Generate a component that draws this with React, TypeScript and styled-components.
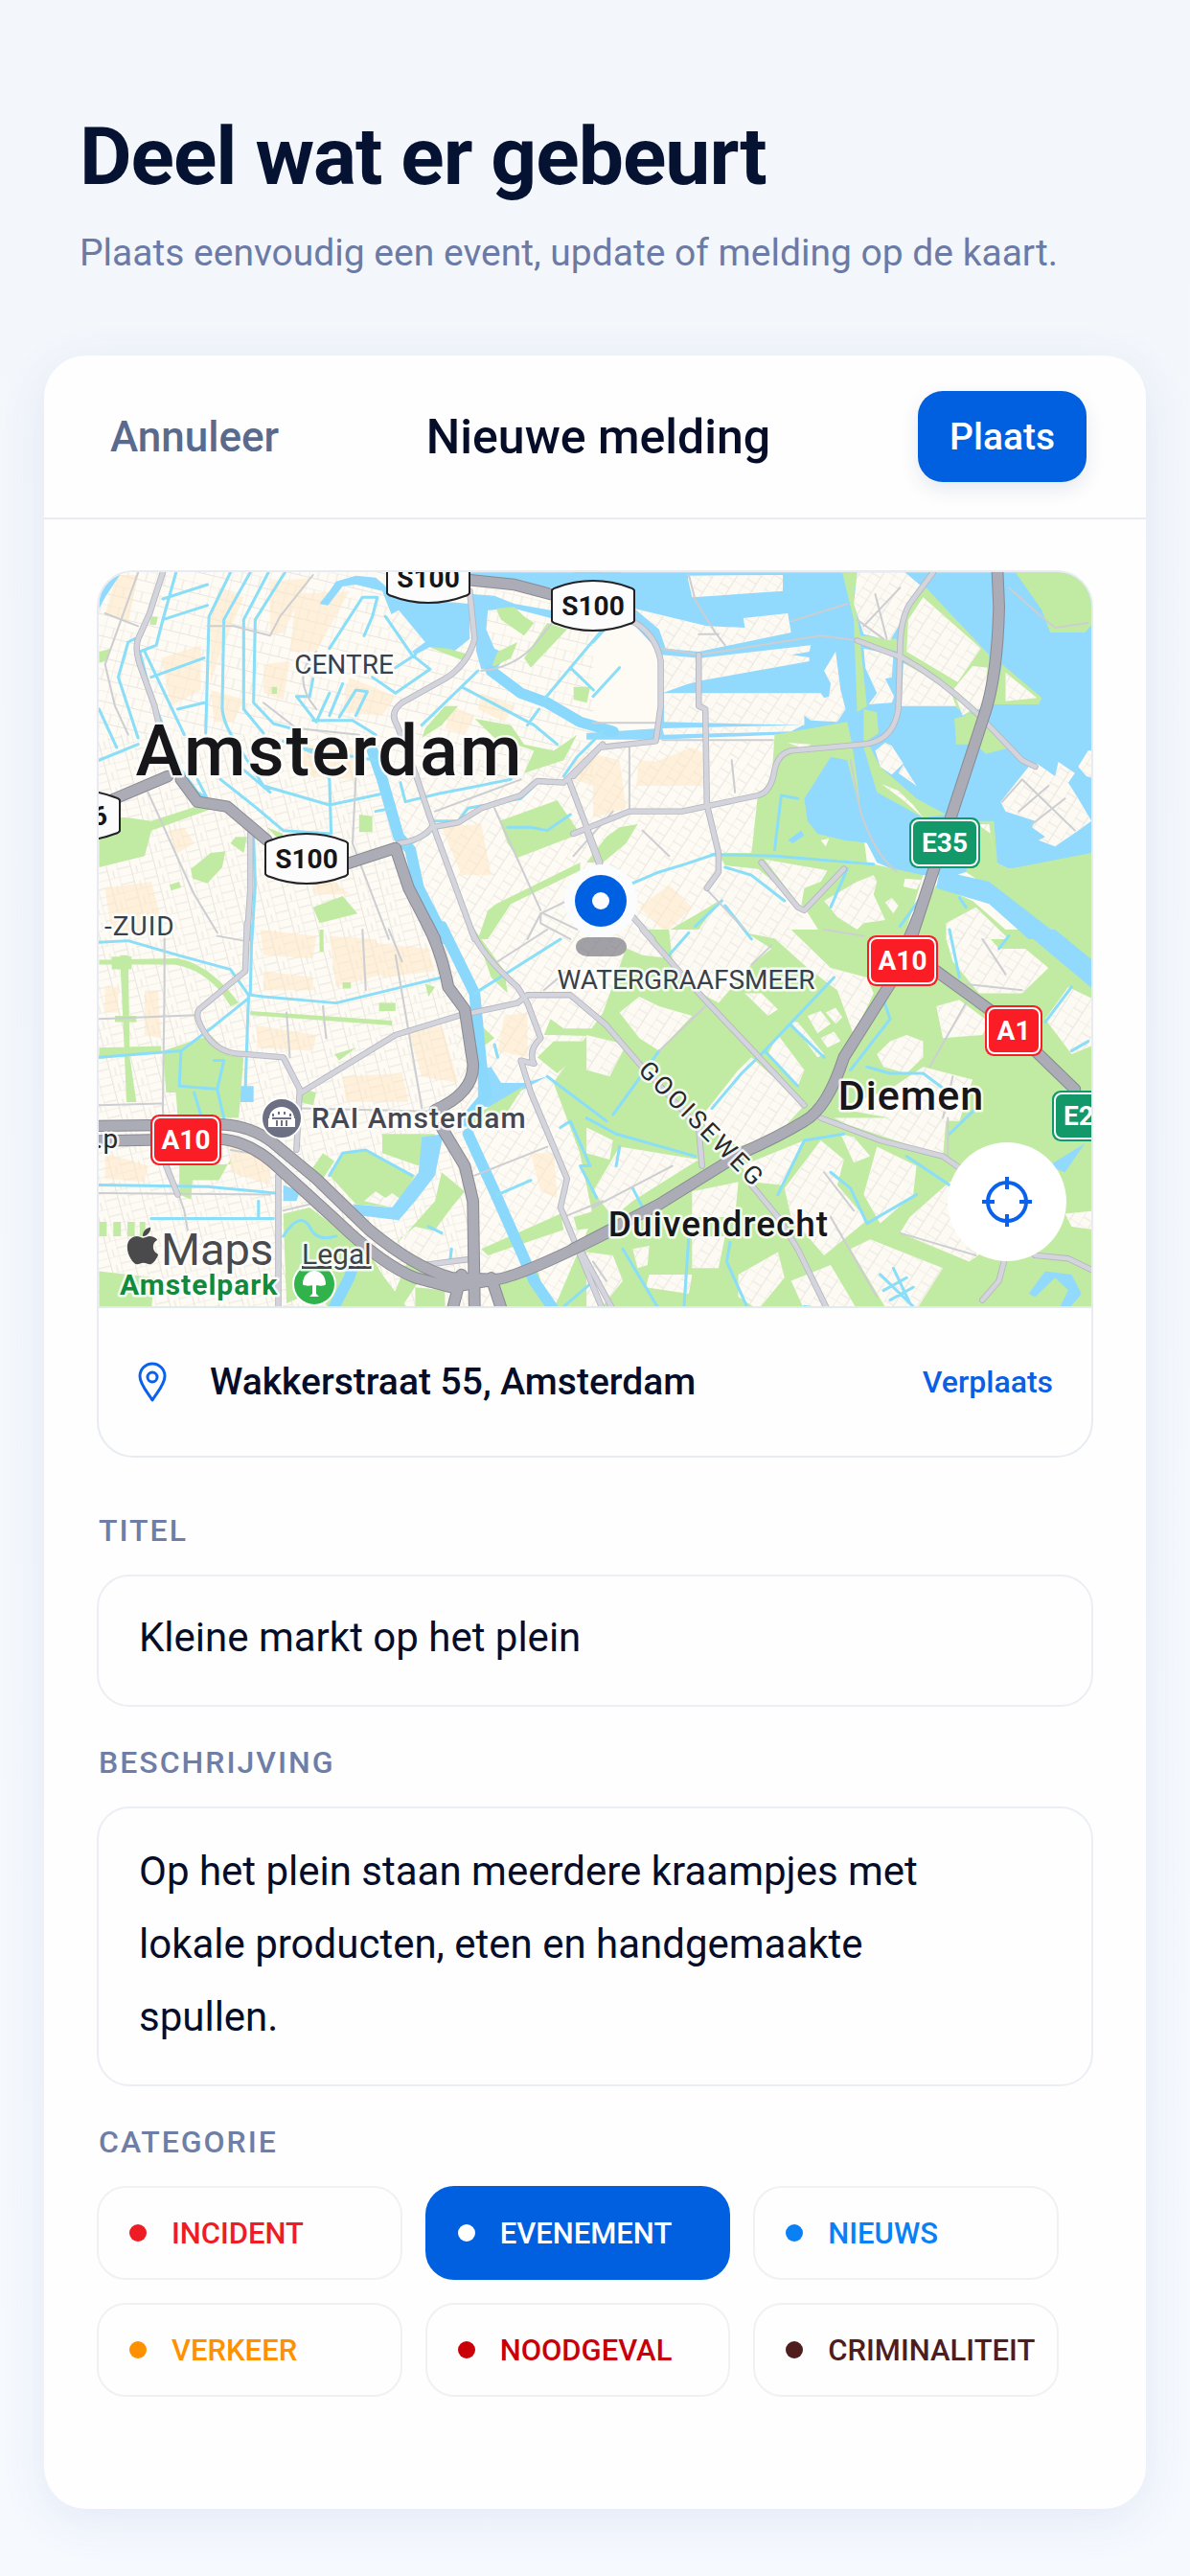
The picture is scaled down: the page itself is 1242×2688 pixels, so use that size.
import { useState } from 'react';
import { FaApple } from 'react-icons/fa';
import styled, { createGlobalStyle } from 'styled-components';

const GlobalStyle = createGlobalStyle`
  * {
    box-sizing: border-box;
  }
  body {
    margin: 0;
    background-color: #f4f7fc;
    font-family: Roboto, 'Liberation Sans', sans-serif;
    color: #060d28;
  }
  button, input, textarea {
    font-family: inherit;
    color: inherit;
  }
`;

const Page = styled.main`
  min-height: 100vh;
  padding: 112px 46px 70px;
  background: linear-gradient(#f3f6fb, #f6f9fe);
`;

const Intro = styled.header`
  padding: 0 37px;
`;

const Title = styled.h1`
  margin: 0;
  font-size: 84px;
  line-height: 104px;
  font-weight: 700;
  letter-spacing: -1px;
  color: #061232;
`;

const Subtitle = styled.p`
  margin: 18px 0 0;
  font-size: 39px;
  line-height: 60px;
  color: #6b7ba6;
`;

const Card = styled.section`
  margin-top: 77px;
  padding-bottom: 117px;
  border-radius: 44px;
  background-color: #fefefe;
  box-shadow: 0 12px 48px rgba(70, 110, 180, 0.11);
`;

const Toolbar = styled.div`
  display: grid;
  grid-template-columns: 1fr auto 1fr;
  align-items: center;
  height: 171px;
  padding: 0 62px 0 69px;
  border-bottom: 2px solid #e9ecf1;
`;

const CancelBtn = styled.button`
  justify-self: start;
  padding: 0;
  border: 0;
  background: none;
  font-size: 44px;
  font-weight: 500;
  color: #586a8d;
`;

const Heading = styled.h2`
  margin: 0;
  font-size: 50px;
  font-weight: 500;
`;

const SubmitBtn = styled.button`
  justify-self: end;
  height: 95px;
  padding: 0 33px;
  border: 0;
  border-radius: 26px;
  background-color: #0060e0;
  box-shadow: 0 8px 20px rgba(0, 50, 120, 0.1);
  font-size: 39px;
  font-weight: 500;
  color: #ffffff;
`;

const Form = styled.form`
  display: flex;
  flex-direction: column;
  padding: 53px 55px 0;
`;

const MapCard = styled.div`
  overflow: hidden;
  margin-bottom: 18px;
  border: 2px solid #e8ecf2;
  border-radius: 38px;
`;

const MapArea = styled.div`
  position: relative;
  border-bottom: 2px solid #e3eaee;

  > svg {
    display: block;
    width: 100%;
    height: auto;
  }
`;

const LocateBtn = styled.button`
  position: absolute;
  right: 26px;
  bottom: 47px;
  display: grid;
  place-items: center;
  width: 124px;
  height: 124px;
  padding: 0;
  border: 0;
  border-radius: 50%;
  background-color: #ffffff;
`;

const AddressRow = styled.div`
  display: flex;
  align-items: center;
  height: 154px;
  padding: 0 40px;
`;

const Address = styled.span`
  flex: 1;
  margin-left: 44px;
  font-size: 39px;
  font-weight: 500;
`;

const MoveBtn = styled.button`
  padding: 0;
  border: 0;
  background: none;
  font-size: 32px;
  font-weight: 500;
  color: #0a5fe2;
`;

const Label = styled.label`
  margin: 36px 0 24px 2px;
  font-size: 32px;
  line-height: 44px;
  font-weight: 500;
  letter-spacing: 2px;
  color: #6e7ea6;
`;

const GroupLabel = styled(Label).attrs({ as: 'div' })``;

const Input = styled.input`
  width: 100%;
  height: 138px;
  padding: 0 42px 8px;
  border: 2px solid #ebeef3;
  border-radius: 34px;
  background: none;
  font-size: 42px;
`;

const TextArea = styled.textarea`
  width: 100%;
  height: 292px;
  padding: 28px 120px 28px 42px;
  border: 2px solid #ebeef3;
  border-radius: 34px;
  background: none;
  font-size: 42px;
  line-height: 76px;
  resize: none;
`;

const Categories = styled.div`
  display: grid;
  grid-template-columns: repeat(3, 1fr);
  gap: 24px;
  padding-right: 36px;
`;

const Chip = styled.button<{ $color: string; $active: boolean }>`
  display: flex;
  align-items: center;
  gap: 26px;
  height: 98px;
  padding: 0 0 0 32px;
  border: 2px solid ${(props) => (props.$active ? '#0060e0' : '#f0f1f3')};
  border-radius: 30px;
  background-color: ${(props) => (props.$active ? '#0060e0' : 'transparent')};
  font-size: 31px;
  font-weight: 500;
  color: ${(props) => (props.$active ? '#ffffff' : props.$color)};

  &::before {
    content: '';
    width: 18px;
    height: 18px;
    border-radius: 50%;
    background-color: currentColor;
  }
`;

const MapText = styled.text<{ $size: number; $weight?: number; $spacing?: number }>`
  font-size: ${(props) => props.$size}px;
  font-weight: ${(props) => props.$weight ?? 400};
  letter-spacing: ${(props) => props.$spacing ?? 0}px;
  paint-order: stroke;
  stroke: rgba(255, 255, 255, 0.85);
  stroke-width: 5px;
  stroke-linejoin: round;
`;

const SignText = styled.text`
  font-size: 28px;
  font-weight: 700;
  text-anchor: middle;
`;

// The city is drawn in four tiles, each with its own origin.
interface ITile {
  x: number;
  y: number;
  water: string;
  parks: string;
  land: string;
  ponds: string;
  blocks: string;
  rivers: string;
  canals: string;
  lanes: string;
  roads: string;
  highways: string;
}

const TILES: ITile[] = [
  {
    x: 0,
    y: 0,
    water:
      'M42 52H110L60 130 42 165ZM710 150 740 110 760 80 820 62 880 68 905 90 930 120 1040 140 1165 150V260L1110 305 1045 285 1000 310 950 260 930 190 900 110 820 90 780 95 735 155ZM1175 120 1240 125 1300 150 1410 170 1568 200 1568 235 1430 200 1300 165 1220 170 1215 230 1240 290 1280 310 1240 360 1200 355 1185 300ZM1160 52H1568V120L1410 100 1160 65Z',
    parks:
      'M42 815 130 820 200 830 350 780 390 790 200 860 180 940 42 975ZM320 980 380 930 425 925 415 975 370 1025 325 1010ZM690 1100 780 1065 825 1120 710 1150ZM830 810 870 815V865H830ZM1255 830 1430 765 1500 870 1310 945 1280 900ZM1245 1090 1500 960V985L1290 1090 1220 1200H1190L1220 1110ZM1180 510 1290 530 1330 590 1420 610 1490 560 1450 640 1330 680 1360 610 1240 570ZM1030 540 1090 470H1130L1080 530 1020 570ZM1400 210 1460 230 1350 350 1330 320ZM1245 165 1300 160 1330 190 1360 210 1330 250 1260 200ZM42 300 78 290 60 330 42 335ZM565 410H581V432H565ZM550 850 600 870 590 890ZM1480 410H1530L1520 460 1480 450ZM455 880H490L480 930 440 900ZM1250 300 1310 270 1290 320 1230 350ZM255 1030 285 1020 290 1038 260 1048ZM200 190 220 192 215 216 195 215ZM1040 285 1100 290 1165 310 1150 330Z',
    land: 'M915 190 950 170 1030 270 990 300 920 235Z',
    ponds: '',
    blocks:
      'M95 60 160 60 130 210 60 180ZM380 200 410 100 480 130 410 300 380 400ZM230 320 350 280 350 420 260 470ZM560 80 680 70 600 240 560 250ZM800 380 940 440 900 500 780 490ZM640 120 800 110 700 300 620 300ZM250 860 300 850 330 900 280 930ZM1080 850 1200 840 1230 1000 1140 1000ZM540 340 620 330 600 450 540 430ZM620 900 800 1060 700 1060ZM1110 470 1180 500 1150 560 1090 540ZM60 1040 200 1020 240 1180 80 1180ZM1200 430 1300 470 1270 520 1190 480ZM380 420 480 450 450 520 390 520ZM640 590 850 600 820 700 660 690Z',
    rivers: 'M1230 360 1320 430 1400 460 1500 520 1600 550M870 610 900 700 950 880 985 920 1010 1040 1090 1200',
    canals:
      'M440 52 375 190 365 555M500 52 420 200 415 480Q420 530 460 590L540 720 740 780 900 745M555 52 480 200V480L540 555M605 52 515 200 510 460 570 525 640 545M275 52 235 200 215 280 165 300M235 135 370 90M235 200 370 155M180 300 300 560M165 300 200 440 290 670 340 740 370 760M130 270 100 380 160 570M150 260 130 270M42 480 95 600M42 640 160 590M200 380 360 320M280 480 360 460M410 700 520 790 600 860 745 870M740 700 745 870M480 670 560 740M640 440 700 520 740 430M740 290 840 130 885 130 870 190 845 250M690 385 680 440 640 440M690 515 810 515 880 560M770 505 820 420 855 425 820 500M780 400 740 500M910 190 990 310 1045 355 940 430 870 380M1000 310 940 350M1020 530 1190 360M1140 410 1360 530 1430 590M340 700 370 760M510 880 515 1030 505 1200M955 710 970 770 1070 745 1290 700M1060 830H1130L1160 790 1320 760 1370 710M970 910 1040 870 1055 830M1390 450 1568 230M1470 350 1540 420M1340 530 1375 480M1568 550 1490 630 1450 690M600 580 700 620 740 700M640 600 880 640M880 800 930 790M1280 850 1350 850 1400 860 1470 810',
    lanes:
      'M160 52 60 340 90 470 130 560M160 220 60 180M370 220H450L560 250 590 190 690 60M190 740 330 1060 400 1180M820 690 810 900 920 1200M1240 790 1310 950 1380 1110M1060 800 1320 700M1200 360Q1300 350 1360 280L1430 190M1380 1120 1480 1070M1380 1120V1150L1470 1200M1340 1200 1380 1120M540 460 640 540 830 560M700 300Q620 380 700 480',
    roads:
      'M235 52 195 180 160 260Q150 290 165 340L210 470 230 560M1165 110 1180 260Q1160 340 1090 385L960 460Q920 490 945 530L1000 680 1045 820 1180 1200M500 870V1050L490 1200M950 900Q1020 890 1050 850L1130 835 1200 790 1320 750 1370 705 1450 710 1568 590M1465 700 1560 960',
    highways: 'M60 775 90 760 250 690M290 700 340 770 430 785 550 890M790 965 940 915 980 1040 1060 1200M1160 75 1300 90 1410 120',
  },
  {
    x: 1539,
    y: 0,
    water:
      'M-60 52H1530V960L1400 960 1260 980 1220 960 1100 1000 950 1000 860 960 760 760 720 640 560 560 200 575 -20 575 -20 555 200 540 210 430 290 400 200 380V300L100 190-60 100Z',
    parks:
      'M755 52H800L790 130 810 250 920 260 930 300 810 275 830 470 800 490 790 200ZM820 480 860 490 865 555 830 580 870 660 980 760 1070 810 1000 820 860 740 820 600ZM1210 465 1240 340 1360 445 1350 465ZM1280 52H1470L1530 100V195L1490 240H1385L1360 170ZM1095 510 1160 490 1265 600 1190 620 1160 590 1100 590ZM550 560 770 520 785 590 800 700 820 880 830 960 480 930 500 740 540 720ZM380 930 520 930 850 965 1000 1000 940 1200H700L640 1100 500 980 400 970ZM1040 1030 1150 1080 1250 1170 1250 1210 950 1210ZM1130 990 1220 960 1260 980 1510 930V1220H1380L1290 1100ZM1165 830 1215 830 1225 960 1130 990ZM920 100 1000 90 1200 310 1210 460 1130 500 940 330ZM-20 960 40 880 80 850 135 840 100 900 30 960ZM0 1200 200 1190 350 1100 380 1080 300 1200Z',
    land: 'M285 62 575 60V110L300 130ZM125 165 345 220 460 225 455 195 590 180 600 240 320 300 220 290 200 230ZM325 320 660 280 655 300 600 310 655 318 655 330 330 390 215 420 205 310ZM215 430H690L700 445 715 440 720 400 700 360 735 300 750 420 765 480 740 520 660 515 640 500 640 530 215 520ZM210 540 635 530 600 550 215 560ZM800 52H945L1000 100 960 160 900 265 820 245 790 150ZM1000 130 1175 290 1105 395 950 300 955 200ZM940 335 1000 370 1085 430 1100 470H935ZM1090 420 1150 345 1195 350 1185 480 1150 480 1120 500ZM820 290 910 310 905 380 885 385 912 440 905 460 835 465 860 430 825 350ZM1250 365 1345 445 1250 455ZM855 610 885 585 905 595 940 650 905 685 870 660ZM925 680 940 655 980 720ZM875 715 925 735 970 780 1000 820 940 765ZM1235 770 1320 660 1345 650 1400 690 1410 645 1460 680 1440 710 1470 760 1510 830 1470 860 1400 910 1350 890 1370 880 1330 850 1340 830 1250 800ZM1470 660 1500 610 1530 610V700L1495 690ZM520 950 710 985 690 1020 640 1040 630 1100ZM400 970 490 980 600 1100 640 1130 560 1200 460 1180 345 1040ZM700 1080 800 1020 850 1000 860 1020 850 1060 885 1140 820 1150 800 1170 740 1130ZM885 1085 905 1070 925 1095 910 1120ZM945 1010 995 1015 980 1045 940 1035ZM1070 1150 1160 1100 1260 1200H1070ZM590 585 660 590 640 605ZM690 890 715 885 705 910ZM1165 840 1200 840 1218 960 1205 870Z',
    ponds: 'M720 630 770 640 800 760 840 900 760 890 680 870 650 830 640 760ZM590 890 630 860 640 875 605 900ZM-60 52H80L200 110 280 90 290 62 120 55ZM1050 985 1200 1020 1400 1180 1440 1200H1320L1200 1090 1040 1040Z',
    blocks:
      'M0 620 80 640 100 790 0 820ZM140 640 340 660 340 720 130 720ZM215 475H335V520H215ZM800 60 900 60 850 150 800 130ZM300 70 370 65V120L310 125ZM150 660 300 600 340 620 330 700 150 690ZM140 1100 230 1030 300 1100 220 1180ZM-60 640 0 620 0 720-60 700Z',
    rivers: '',
    canals: 'M120 1025 200 990 280 965 380 930M360 935 550 940 850 965M400 975 480 1000 580 1080M390 1080 310 1160M400 1095 480 1200M550 920 570 750 620 760M930 1160 1000 1060M1110 1070 1130 1100M80 350 0 440M0 270 60 200M720 1100 770 980',
    lanes:
      'M290 60 310 140 370 240 400 280M320 245H380M210 290 320 310 690 250 800 265M0 523H190M210 577H545M780 640 810 800Q850 930 920 990M110 600V800M600 205 770 150M800 200 880 260M820 220 930 100M855 120 890 260M150 860 230 940M420 640 430 740M340 1040 460 1170M1260 100 1370 200 1400 225 1500 210M-60 940 60 800M1240 770 1300 700 1460 860M1290 800 1380 720M1330 840 1430 760',
    roads:
      'M1030 52 960 150Q930 200 930 300L925 480Q910 580 820 590L600 610Q560 620 550 670 540 740 500 750L270 800H110L-60 870M320 310V470L340 480 345 780 380 930V990L345 1040M800 265 940 320Q1060 390 1170 500L1300 640 1340 660M-20 860 20 970M120 1130 180 1200M510 960 620 1100 640 1110 760 980M110 200Q190 240 205 330V470L190 580 20 600-60 690',
    highways: 'M1225 40 1230 160Q1225 380 1185 500L1090 800 960 1210',
  },
  {
    x: 0,
    y: 1170,
    water: 'M1190 440 1230 430 1260 480 1330 480 1400 460 1310 510 1240 560 1190 550ZM470 490H510V540H470ZM600 800 650 820 640 850 600 850Z',
    parks:
      'M235 380 380 330 440 395 480 400 465 590 280 590 275 510H245ZM285 735H440V720L405 785H325L320 845 285 830ZM105 80H130L135 400 155 540H125L115 300ZM80 85H140V125H80ZM42 95 280 90Q380 110 465 230L440 240Q380 130 270 110L42 110ZM500 255 930 285 930 300 500 268ZM890 230H940V255H890ZM710 0H722V70H710ZM740 770 780 700 850 690 1000 770 940 870 820 860ZM680 760 720 700 755 725 720 780ZM900 640H1060L1010 740 900 700ZM600 890 680 870 860 1010 900 1080 980 1190H740L700 1130 610 1170ZM42 1070 210 1090 200 1190H42ZM42 915H65V960H42ZM85 915H108V960H85ZM128 915H150V960H128ZM165 915H182V960H165ZM930 1000 1060 850 1080 760 1150 820 1110 870 1060 940 960 960ZM1480 900 1580 870V930L1490 940ZM1200 1000 1440 890 1450 940 1220 1020ZM1180 0 1270 130 1280 200 1230 150ZM1390 330 1410 280 1450 310 1568 310V335L1420 330ZM1190 290 1240 340 1200 370ZM1150 600 1330 490 1260 600 1160 630ZM42 370 230 365V385L42 405ZM90 270H155V290H90ZM660 500 700 510 690 550 650 540ZM755 390 820 370 770 410ZM780 165H805V185H780ZM1030 170 1060 180 1040 210ZM1250 1100 1370 1060 1400 1180 1260 1180ZM1370 400 1420 350 1540 350 1430 450ZM1540 540 1580 530V640ZM1000 1120 1090 1130 1090 1190 1000 1190ZM920 1180 980 1030 1050 1040 960 1180Z',
    land: 'M845 850 880 820 910 840 930 825 970 855 930 870ZM960 960 1000 930 1080 950 1060 1040 1000 1020ZM1040 720 1070 700 1050 775Z',
    ponds: 'M1020 650 1085 640 1060 770 1000 850 950 910 830 895 810 860 930 870 1010 760Z',
    blocks:
      'M180 190 220 190 230 340 180 330ZM530 0 700 20 690 90 540 80ZM740 20 880 30 900 140 760 180ZM980 320 1080 300 1130 480 1020 460ZM780 460 960 450 980 540 790 540ZM1270 270 1340 260 1340 400 1250 380ZM60 700 190 740 180 790 60 780ZM1350 700 1420 700 1430 840 1380 820ZM440 650 560 700 560 800 440 760ZM540 130 690 150 690 190 540 190ZM520 300 700 330 690 380 520 370ZM860 40 1040 60 1060 130 900 150ZM60 180 100 180V260H60Z',
    rivers: 'M1080-10 1180 200 1200 420 1215 520 1150 600M1160 640 1240 820 1360 1100 1420 1190M750 1190 800 1090 820 1030',
    canals:
      'M42 40 130 35 280 80 440 125 495 205 485 500M505-10 500 205 540 210 760 230 940 185 1080 150M495 215 380 310 290 380 42 400M290 380 285 490 400 500 420 410 390 410M330 510 350 580M1180 200 1440 30M1400 460 1580 600M1470 600 1530 740 1500 740 1550 840M1470 600 1440 620M1250 830 1350 785M42 800 370 805 575 825M200 905H570M600 960Q650 880 680 930 700 980 760 960M740 770 780 700 850 690 990 770M1450 1180 1530 1110M525 850V905M400 500 420 590M1040 930 1080 950M1240 360 1250 400M1110 1000 1105 1040',
    lanes:
      'M42 280 335 268M240 180 235 560 245 720 300 880 310 940M240 20 240 180M42 550 230 545M42 825 560 830M940 80 1020 560M920 0 960 100M655 560 1080 570M400 20 480 35M600 880 680 860M1180 770 1400 680M1450 900 1568 850M610 260 620 400M840 0 850 190M720 240 730 340M1390 190 1470 120M1250 100 1400 0M440 690 560 710M1490 0 1390-50',
    roads:
      'M490-20 485 130 345 250Q330 270 360 320 400 390 480 390L600 400 650 500 640 690M655 510 940 330 1130 270 1310 230 1340 205H1470L1580 300M585 770V1190M1170 0Q1200 80 1310 180L1340 230 1380 340Q1340 380 1360 420L1320 410 1350 510 1460 780 1440 870 1568 1190M1030 1050 1180 1030M245 740 280 830',
    highways:
      'M1035-20Q1080 70 1100 180L1150 250 1175 420Q1180 510 1060 565M1080 620 1150 740 1175 850 1180 1200M30 615 400 610Q490 610 560 660L700 780 860 940Q1000 1060 1110 1090L1250 1095Q1330 1080 1580 950M30 662 400 655Q500 660 590 750L760 910Q900 1050 1000 1090L1110 1120 1250 1095M1110 1200 1140 1080M1265 1200 1230 1090',
  },
  {
    x: 1539,
    y: 1170,
    water: '',
    parks: 'M120 0H1530V1190H-120L0 900-40 700-120 480 30 260Z',
    land: 'M0 0H140L230 90 150 80 60 40 20 100 60 150 0 150ZM230 0H450L540 60 480 110 380 230 310 190 240 90ZM80 260 140 210 200 240 300 270 200 380 140 340ZM-20 330 100 360 50 460-20 440ZM520 0H600L720 120 830 150 850 200 790 330 740 190 650 120ZM650 270 690 255 720 295 680 325ZM705 260 735 245 755 275 735 295ZM690 340 730 320 750 350 710 370ZM600 290 620 290 700 390 680 400ZM530 390 560 330 640 440 620 490ZM440 440 480 400 640 550 560 640 440 680 340 620V570ZM-20 620 60 660 50 720-20 700ZM80 680 320 720 120 850 60 900 0 820ZM450 740 640 660 570 800 480 790ZM580 810 690 660 760 720 740 800 830 910 700 1020 600 900ZM820 830 860 680 980 740 970 830 870 920ZM730 590H1070L1060 710 770 610ZM1000 430 1150 470 1110 600 900 590 740 560 900 500ZM860 390 900 350 950 330 1000 350 1000 400 950 450 880 430ZM1040 240 1110 220 1200 290 1180 330 1060 340ZM1070 30 1180 0 1230 60 1310 60 1380 120 1300 200 1170 200 1090 100ZM1370 280 1440 180 1520 220V360L1450 390ZM1080 790 1120 780 1180 1010 1140 1040 930 950 960 900ZM840 970 1060 1060 980 1190H890L780 1000ZM170 1080 300 1080 290 1140 160 1120ZM300 960 400 960 380 1060 300 1060ZM440 1080 560 1010 580 1090 500 1190 440 1150ZM600 1100 720 1050 800 1190H640ZM-20 1010 60 1020 90 1100 20 1190H-20ZM120 1000 170 990 165 1050 135 1060ZM300 820 440 790 430 900 300 900ZM460 200 510 200 560 250 530 270ZM1430 890 1520 880V940L1450 930ZM750 640 790 650 840 710 790 730Z',
    ponds:
      'M1300 0H1400L1530 110V200ZM1380 740 1490 670 1430 760ZM1320 1140 1370 1070 1450 1080 1480 1140 1440 1190H1410L1440 1130 1400 1090 1340 1150Z',
    blocks: 'M780 820 820 850 790 890ZM600 60 680 100 650 110ZM690 690 730 740 700 760ZM900 740 950 780 880 820ZM1130 60 1180 100 1130 120ZM450 520 500 540 480 600 430 570Z',
    rivers: '',
    canals:
      'M510 390 730 150M360 560 450 450 520 380 620 490M600 300 700 400M-20 590 70 640 310 710M60 580 200 380M70 740 80 680M560 830 640 660 760 640M120 810 150 870M290 960 275 1190M415 980 405 1040 470 1190M720 760 780 810 830 920 980 830M950 710 1080 800M870 1080 970 1180M910 1060 960 1170M880 1130 950 1090M900 1160 970 1120M830 430 900 450 1000 450 1090 520M1080 0 1110 150M230 80 290 10M0-60 60-120M1370 290 1450 180M1230 60 1260 20M700 1190 640 1180M1080 640 1160 560M780 440 900 280 880 220M90 1000 200 1190M1450 380 1500 350',
    lanes:
      'M200 380 340 240M480 110 540 50M820 20 700 0M1075 590V710M1180 30 1250 140M1020 430 1130 230M0 1040 40 1100M0 870 240 740M720 900 860 1150M930 950 1160 1020M1120 170 1300 190M700 760 790 880M1090 460 1060 590',
    roads:
      'M150 0 260 130 330 210 640 550M690 590 870 660 1060 710 1130 760M-40 230 40 300 140 420 320 620 330 740M480 800 560 900 620 1000 710 1190M1340 1020 1440 1030 1520 1070M1245 1040 1230 1100 1180 1160M-40 1000 60 1190',
    highways: 'M985-40 900 170 760 400Q710 560 640 600 560 650 450 700L200 860-60 1000M1040 130 1200 250 1340 380 1460 500',
  },
];

type LayerKey = Exclude<keyof ITile, 'x' | 'y'>;

interface ILayer {
  name: LayerKey;
  fill?: string;
  stroke?: string;
  width?: number;
}

const LAYERS: ILayer[] = [
  { name: 'blocks', fill: 'rgba(253, 232, 196, 0.55)' },
  { name: 'water', fill: '#91d9fd' },
  { name: 'parks', fill: '#c1eba3' },
  { name: 'land', fill: '#fdfaf3' },
  { name: 'land', fill: 'url(#streets-b)' },
  { name: 'ponds', fill: '#91d9fd' },
  { name: 'rivers', stroke: '#8ad8fc', width: 34 },
  { name: 'canals', stroke: '#8bdef8', width: 9 },
  { name: 'lanes', stroke: '#cdced1', width: 6 },
  { name: 'roads', stroke: '#b5b6c0', width: 19 },
  { name: 'roads', stroke: '#d3d4dc', width: 14 },
  { name: 'highways', stroke: '#8a8a94', width: 37 },
  { name: 'highways', stroke: '#acacb7', width: 31 },
];

const SHIELDS = [
  { x: 344, y: 6, text: 'S100' },
  { x: 516, y: 35, text: 'S100' },
  { x: 217, y: 299, text: 'S100' },
];

const SIGNS = [
  { x: 883, y: 282, width: 74, text: 'E35', color: '#139869' },
  { x: 839, y: 405, width: 74, text: 'A10', color: '#fb1d25' },
  { x: 955, y: 478, width: 60, text: 'A1', color: '#fb1d25' },
  { x: 91, y: 592, width: 74, text: 'A10', color: '#fb1d25' },
];

const SHIELD_PATH = 'M-43-16Q-42-18-38-19Q-20-26 0-26T38-19Q42-18 43-16V16Q42 18 38 19Q20 26 0 26T-38 19Q-42 18-43 16Z';

const CityMap = () => (
  <svg viewBox="0 0 1036 766" role="img" aria-label="Kaart van Amsterdam">
    <defs>
      <pattern id="streets-a" width="72" height="50" patternUnits="userSpaceOnUse" patternTransform="rotate(-14)">
        <path d="M0 0H72M0 26H42M0 0V50M42 0V50M58 26V50" fill="none" stroke="#e8e5df" strokeWidth="3" />
      </pattern>
      <pattern id="streets-b" width="62" height="54" patternUnits="userSpaceOnUse" patternTransform="rotate(32)">
        <path d="M0 0H62M0 29H32M0 0V54M32 0V54" fill="none" stroke="#e8e5df" strokeWidth="3" />
      </pattern>
      <pattern id="streets-c" width="56" height="66" patternUnits="userSpaceOnUse" patternTransform="rotate(14)">
        <path d="M0 0H56M0 33H56M0 0V66M28 0V33" fill="none" stroke="#e8e5df" strokeWidth="3" />
      </pattern>
    </defs>
    <rect width="1036" height="766" fill="#fefbf4" />
    <g transform="matrix(.3444 0 0 .3333 -14 -17)" fill="none" strokeLinejoin="round" strokeLinecap="round">
      <path d="M0 0H1539V700H900L860 560H0Z" fill="url(#streets-c)" />
      <path d="M0 560H860L1100 1200 1200 2400H0Z" fill="url(#streets-a)" />
      <path d="M900 700 1539 580H2100V1200L1539 2400H1200L1100 1200Z" fill="url(#streets-b)" />
      {LAYERS.map((layer, i) =>
        TILES.map((tile) => (
          <path
            key={`${i}-${tile.x}-${tile.y}`}
            d={tile[layer.name]}
            transform={`translate(${tile.x} ${tile.y})`}
            fill={layer.fill}
            stroke={layer.stroke}
            strokeWidth={layer.width}
          />
        )),
      )}
      <path d="M410 1803Q495 1808 565 1868L760 2045" stroke="#f6f6f6" strokeWidth="6" />
    </g>

    {SHIELDS.map((shield) => (
      <g key={`${shield.x}`} transform={`translate(${shield.x} ${shield.y})`}>
        <path d={SHIELD_PATH} fill="#fcfcfc" stroke="#222226" strokeWidth="2" />
        <SignText y="10" fill="#161618">
          {shield.text}
        </SignText>
      </g>
    ))}
    <g transform="translate(-21 254)">
      <path d={SHIELD_PATH} fill="#fcfcfc" stroke="#222226" strokeWidth="2" />
      <SignText x="22" y="10" fill="#161618">
        6
      </SignText>
    </g>

    {SIGNS.map((sign) => (
      <g key={`${sign.x}`} transform={`translate(${sign.x} ${sign.y})`}>
        <rect x={-sign.width / 2} y="-26" width={sign.width} height="53" rx="9" fill={sign.color} />
        <rect x={3 - sign.width / 2} y="-23" width={sign.width - 6} height="47" rx="7" fill="none" stroke="#fff" strokeWidth="2" />
        <SignText y="10" fill="#ffffff">
          {sign.text}
        </SignText>
      </g>
    ))}
    <g transform="translate(1032 567)">
      <rect x="-37" y="-26" width="84" height="53" rx="9" fill="#139869" />
      <rect x="-34" y="-23" width="78" height="47" rx="7" fill="none" stroke="#fff" strokeWidth="2" />
      <SignText x="-9" y="10" fill="#ffffff">
        E2
      </SignText>
    </g>

    <MapText x="256" y="106" textAnchor="middle" $size={28} fill="#3a4048">
      CENTRE
    </MapText>
    <MapText x="241" y="212" textAnchor="middle" $size={74} $weight={500} $spacing={2} fill="#17171a">
      Amsterdam
    </MapText>
    <MapText x="6" y="379" $size={28} $spacing={1} fill="#3a4048">
      -ZUID
    </MapText>
    <MapText x="613" y="435" textAnchor="middle" $size={28} fill="#3a4048">
      WATERGRAAFSMEER
    </MapText>
    <MapText x="222" y="580" $size={30} $weight={500} $spacing={1} fill="#454852">
      RAI Amsterdam
    </MapText>
    <MapText x="848" y="561" textAnchor="middle" $size={43} $weight={500} $spacing={1} fill="#17171a">
      Diemen
    </MapText>
    <MapText x="647" y="693" textAnchor="middle" $size={37} $weight={500} $spacing={1} fill="#17171a">
      Duivendrecht
    </MapText>
    <MapText $size={26} $spacing={3} fill="#26282c" transform="translate(562 521) rotate(45)">
      GOOISEWEG
    </MapText>
    <MapText x="-3" y="601" $size={28} fill="#26282c">
      .p
    </MapText>
    <MapText x="22" y="754" $size={30} $weight={700} $spacing={1} fill="#128a3c">
      Amstelpark
    </MapText>

    <g transform="translate(191 570)">
      <circle r="21" fill="#6d7083" stroke="#fff" strokeWidth="2" />
      <path d="M-14 9V0H-13A13 12 0 0 1 13 0H14V9Z" fill="#fff" />
      <path d="M-9-2V-5M-3-4V-7M3-4V-7M9-2V-5M-5 8V2M0 8V2M5 8V2M-10 0H10" stroke="#6d7083" strokeWidth="2" />
    </g>
    <g transform="translate(225 743)">
      <circle r="22" fill="#2fb34a" stroke="#fff" strokeWidth="2" />
      <path d="M-12 0C-12-9-6-14 0-14S12-9 12 0C12 2 3 2 2 1V10L5 13H-5L-2 10V1C-3 2-12 2-12 0Z" fill="#fff" />
    </g>

    <FaApple x="24" y="681" size={44} color="#4a4a4d" />
    <MapText x="65" y="723" $size={47} fill="#4a4a4d">
      Maps
    </MapText>
    <a href="#legal">
      <MapText x="212" y="722" $size={30} fill="#3f4347" textDecoration="underline">
        Legal
      </MapText>
    </a>

    <rect x="498" y="381" width="53" height="20" rx="12" fill="#70707c" opacity="0.65" />
    <circle cx="524" cy="343" r="38" fill="#fbfcfe" />
    <circle cx="524" cy="343" r="27" fill="#0060e2" />
    <circle cx="524" cy="343" r="9" fill="#fbfcfe" />
  </svg>
);

const LocateIcon = () => (
  <svg width="52" height="52" viewBox="0 0 52 52" fill="none" stroke="#0a62ec" strokeWidth="4" aria-hidden="true">
    <circle cx="26" cy="26" r="20" />
    <path d="M26 0V13M26 39V52M0 26H13M39 26H52" />
  </svg>
);

const PinIcon = () => (
  <svg width="32" height="42" viewBox="0 0 32 42" fill="none" stroke="#0a62ec" strokeWidth="3" strokeLinejoin="round" aria-hidden="true">
    <path d="M16 40C12 33 3 24 3 15A13 13 0 0 1 29 15C29 24 20 33 16 40Z" />
    <circle cx="16" cy="16" r="5" />
  </svg>
);

const CATEGORIES = [
  { name: 'INCIDENT', color: '#ee1c25' },
  { name: 'EVENEMENT', color: '#0060e0' },
  { name: 'NIEUWS', color: '#0a80f5' },
  { name: 'VERKEER', color: '#ff9100' },
  { name: 'NOODGEVAL', color: '#c90008' },
  { name: 'CRIMINALITEIT', color: '#4f1d1d' },
];

const App = () => {
  const [category, setCategory] = useState('EVENEMENT');

  return (
    <Page>
      <GlobalStyle />
      <Intro>
        <Title>Deel wat er gebeurt</Title>
        <Subtitle>Plaats eenvoudig een event, update of melding op de kaart.</Subtitle>
      </Intro>
      <Card>
        <Toolbar>
          <CancelBtn type="button">Annuleer</CancelBtn>
          <Heading>Nieuwe melding</Heading>
          <SubmitBtn type="submit" form="report">
            Plaats
          </SubmitBtn>
        </Toolbar>
        <Form id="report" onSubmit={(e) => e.preventDefault()}>
          <MapCard>
            <MapArea>
              <CityMap />
              <LocateBtn type="button" aria-label="Mijn locatie">
                <LocateIcon />
              </LocateBtn>
            </MapArea>
            <AddressRow>
              <PinIcon />
              <Address>Wakkerstraat 55, Amsterdam</Address>
              <MoveBtn type="button">Verplaats</MoveBtn>
            </AddressRow>
          </MapCard>
          <Label htmlFor="title">TITEL</Label>
          <Input id="title" defaultValue="Kleine markt op het plein" />
          <Label htmlFor="description">BESCHRIJVING</Label>
          <TextArea
            id="description"
            defaultValue="Op het plein staan meerdere kraampjes met lokale producten, eten en handgemaakte spullen."
          />
          <GroupLabel id="category">CATEGORIE</GroupLabel>
          <Categories role="group" aria-labelledby="category">
            {CATEGORIES.map(({ name, color }) => (
              <Chip
                key={name}
                type="button"
                $color={color}
                $active={name === category}
                aria-pressed={name === category}
                onClick={() => setCategory(name)}
              >
                {name}
              </Chip>
            ))}
          </Categories>
        </Form>
      </Card>
    </Page>
  );
};

export default App;
